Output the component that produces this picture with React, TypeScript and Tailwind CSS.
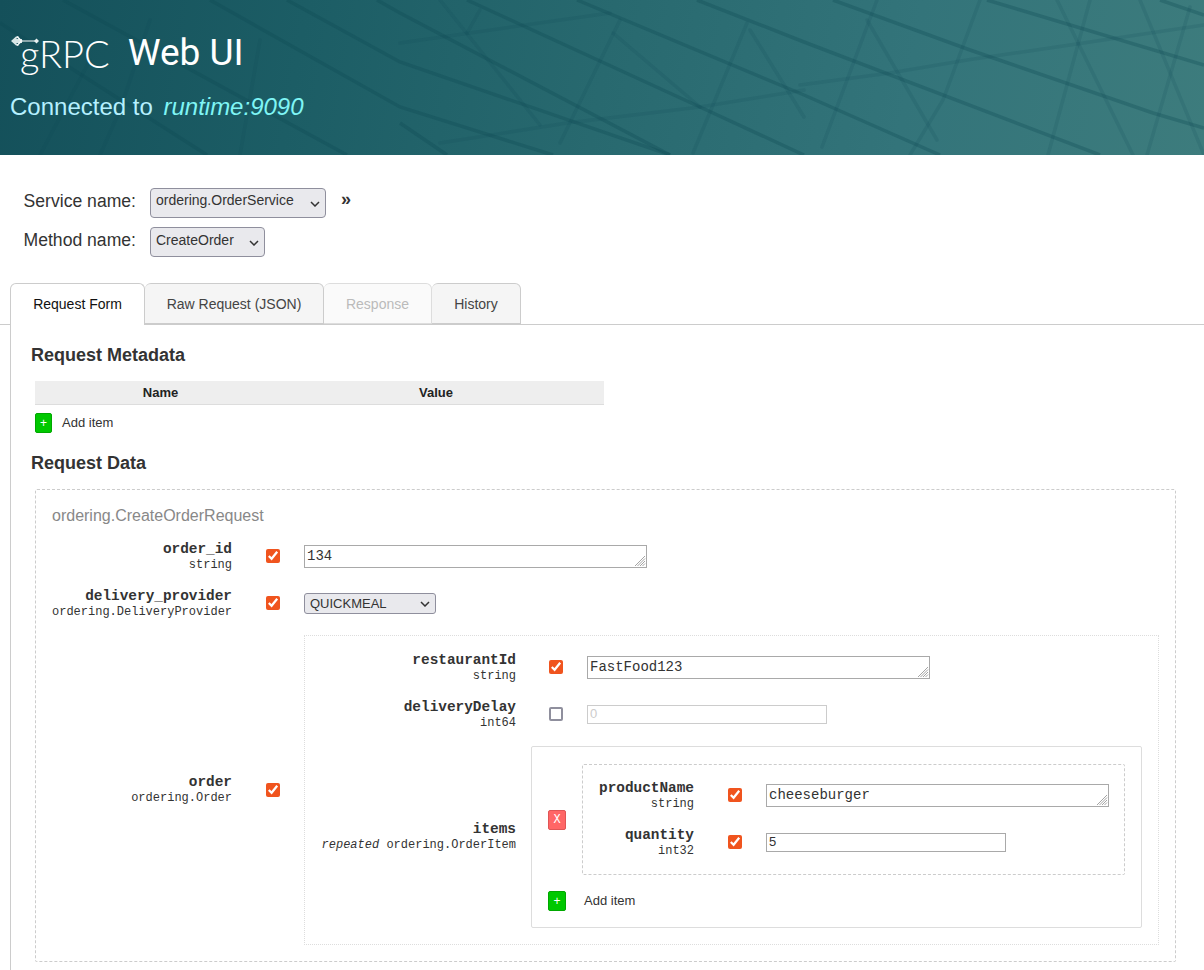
const darkLines = [
  "M0 23L207 155", "M63 0L347 155", "M210 0L400 107L553 155", "M287 0L400 62L670 155", "M377 0L400 13L670 155",
  "M400 123L447 155", "M467 0L700 107L804 155", "M577 0L804 95L940 155", "M697 0L804 42L1100 155",
  "M833 0L970 50L1153 113L1204 128", "M987 0L1204 65", "M1160 0L1204 15",
];
const softLines = [
  "M440 0L540 125", "M480 10L467 33", "M620 20L560 143", "M613 33L700 107", "M747 23L693 153", "M750 30L804 117",
  "M867 20L937 140", "M877 0L822 147", "M980 0L943 100L910 155", "M1057 0L1133 155", "M1090 0L1048 155",
  "M1140 0L1204 155", "M1190 7L1147 155", "M800 85L890 73L967 60L1070 45L1204 25", "M400 43L610 13",
  "M440 143L567 123L700 107L804 90", "M90 60L40 155", "M150 20L120 110L100 155", "M260 40L240 155",
];

function HeaderArt() {
  return (
    <svg className="absolute inset-0 blur-[0.6px]" width="1204" height="155" viewBox="0 0 1204 155" fill="none">
      {softLines.map((d) => (
        <path key={d} d={d} stroke="#0c4a52" strokeWidth="3.5" opacity="0.14" strokeLinecap="round" />
      ))}
      {darkLines.map((d) => (
        <path key={d} d={d} stroke="#0c4a52" strokeWidth="3.5" opacity="0.3" />
      ))}
    </svg>
  );
}

function GrpcMark() {
  return (
    <svg className="absolute left-[11px] top-[35px]" width="30" height="12" viewBox="0 0 30 12" fill="none">
      <path d="M0 6L5 1.5H8L5 4H11V8H5L8 10.5H5Z" fill="#d8e6e6" />
      <path d="M6 1.5L10.5 6L6 10.5" stroke="#f4f8f8" strokeWidth="1.6" />
      <path d="M11 6H25" stroke="#ffffff" strokeWidth="1" />
      <path d="M25.5 3.5L28 6L25.5 8.5L23 6Z" fill="#e8f0f0" />
    </svg>
  );
}

function Chevron() {
  return (
    <svg className="pointer-events-none absolute right-[6px] top-1/2 -translate-y-[calc(50%-1px)]" width="10" height="6" viewBox="0 0 10 6" fill="none">
      <path d="M1 1L5 5L9 1" stroke="#333" strokeWidth="1.5" />
    </svg>
  );
}

function Chk() {
  return <input type="checkbox" defaultChecked className="m-0 h-[14px] w-[14px] shrink-0 accent-[#f0541e]" />;
}

function AddItem({ gap }: { gap: string }) {
  return (
    <div className="flex items-center text-[13px] text-[#333]">
      <span className={`flex h-[20px] items-center justify-center rounded-[2px] border border-[#00a800] bg-[#00c800] text-[12px] text-white ${gap}`}>+</span>
      <span>Add item</span>
    </div>
  );
}

function FieldLabel({ name, type, width, repeated }: { name: string; type: string; width: string; repeated?: boolean }) {
  return (
    <div className={`shrink-0 text-right font-['Liberation_Mono',monospace] text-[#333] ${width}`}>
      <div className="text-[14.4px] leading-[16px] font-bold">{name}</div>
      <div className="text-[12px] leading-[16px]">
        {repeated && <i>repeated </i>}
        {type}
      </div>
    </div>
  );
}

function TextBox({ value }: { value: string }) {
  return (
    <div className="relative h-[23px] w-[343px]">
      <textarea
        readOnly
        defaultValue={value}
        className="block h-[23px] w-[343px] resize-none border border-[#a9a9a9] bg-white px-[2px] pt-[2px] font-['Liberation_Mono',monospace] text-[14px] leading-[16px] text-[#333]"
      />
      <svg className="absolute bottom-[1px] right-[1px]" width="12" height="12" viewBox="0 0 12 12" fill="none" stroke="#9a9a9a" strokeWidth="0.9">
        <path d="M1 11L11 1M3.5 11L11 3.5M6 11L11 6M8.5 11L11 8.5" />
      </svg>
    </div>
  );
}

function App() {
  return (
    <div className="h-[970px] w-[1204px] overflow-hidden bg-white font-['Liberation_Sans',Arial,sans-serif] text-[#333]">
      <header className="relative h-[155px] overflow-hidden bg-[linear-gradient(100deg,#14505a_0%,#1c5d65_25%,#28696f_50%,#33747a_75%,#3d7c7d_100%)]">
        <HeaderArt />
        <GrpcMark />
        <div className="relative pl-[20px] pt-[31px]">
          <div className="flex h-[44px] items-center text-white">
            <span className="font-['Lato',sans-serif] text-[38px] font-light leading-[44px]">gRPC</span>
            <span className="ml-[18px] font-['Roboto',sans-serif] text-[37px] leading-[44px]">Web UI</span>
          </div>
          <div className="-ml-[10px] mt-[15px] text-[24px] leading-[34px] text-[#b5f0ff]">
            Connected to <i className="ml-[4px] text-[#7ff5f5]">runtime:9090</i>
          </div>
        </div>
      </header>

      <div className="flex flex-col gap-[9px] pt-[33px]">
        <div className="flex items-center">
          <div className="w-[136px] pb-[4px] text-right text-[17.6px] leading-[20px]">Service name:</div>
          <div className="relative ml-[14px] h-[30px] w-[176px]">
            <select className="block h-[30px] w-[176px] appearance-none rounded-[4px] border border-[#8f8f9d] bg-[#e9e9ed] pb-[5px] pl-[5px] text-[14px] text-[#333]">
              <option>ordering.OrderService</option>
            </select>
            <Chevron />
          </div>
          <span className="mb-[9px] ml-[15px] text-[18px] font-bold leading-[20px]">»</span>
        </div>
        <div className="flex items-center">
          <div className="w-[136px] pb-[4px] text-right text-[17.6px] leading-[20px]">Method name:</div>
          <div className="relative ml-[14px] h-[30px] w-[115px]">
            <select className="block h-[30px] w-[115px] appearance-none rounded-[4px] border border-[#8f8f9d] bg-[#e9e9ed] pb-[4px] pl-[5px] text-[14px] text-[#333]">
              <option>CreateOrder</option>
            </select>
            <Chevron />
          </div>
        </div>
      </div>

      <div className="mt-[26px] flex h-[42px] border-b border-[#ccc] pl-[10px] text-[14px]">
        <div className="z-10 flex h-[42px] w-[135px] items-center justify-center rounded-t-[6px] border border-b-0 border-[#ccc] bg-white text-[#111]">Request Form</div>
        <div className="flex h-[41px] w-[179px] items-center justify-center rounded-t-[6px] border border-l-0 border-[#ccc] bg-[#f5f5f5] pt-[2px] text-[#444]">Raw Request (JSON)</div>
        <div className="flex h-[41px] w-[108px] items-center justify-center rounded-t-[6px] border border-l-0 border-[#ddd] bg-[#fafafa] pt-[2px] text-[#bbb]">Response</div>
        <div className="flex h-[41px] w-[89px] items-center justify-center rounded-t-[6px] border border-l-0 border-[#ccc] bg-[#f5f5f5] pt-[2px] text-[#444]">History</div>
      </div>

      <div className="ml-[10px] h-[645px] border-l border-[#ccc] pl-[20px] pt-[20px]">
        <h2 className="text-[18px] font-bold leading-[21px]">Request Metadata</h2>
        <div className="ml-[4px] mt-[15px] flex h-[24px] w-[569px] items-center border-b border-[#ddd] bg-[#eee] text-[13px] font-bold text-[#222]">
          <div className="w-[250px] pl-[1px] text-center">Name</div>
          <div className="flex-1 pr-[17px] text-center">Value</div>
        </div>
        <div className="ml-[4px] mt-[8px]">
          <AddItem gap="mr-[10px] w-[17px]" />
        </div>
        <h2 className="mt-[20px] text-[18px] font-bold leading-[21px]">Request Data</h2>

        <section className="ml-[4px] mt-[15px] h-[473px] w-[1141px] rounded-[2px] border border-dashed border-[#ccc] pl-[16px] pt-[17px]">
          <div className="text-[16px] leading-[18px] text-[#888]">ordering.CreateOrderRequest</div>

          <div className="mt-[15px] flex h-[32px] items-center">
            <div className="pt-[2px]"><FieldLabel name="order_id" type="string" width="w-[180px]" /></div>
            <div className="ml-[34px] mr-[24px] flex"><Chk /></div>
            <TextBox value="134" />
          </div>

          <div className="mt-[15px] flex h-[32px] items-center">
            <div className="pt-[2px]"><FieldLabel name="delivery_provider" type="ordering.DeliveryProvider" width="w-[180px]" /></div>
            <div className="ml-[34px] mr-[24px] flex"><Chk /></div>
            <div className="relative h-[21px] w-[132px]">
              <select className="block h-[21px] w-[132px] appearance-none rounded-[3px] border border-[#8f8f9d] bg-[#e9e9ed] pl-[5px] text-[13px] text-[#333]">
                <option>QUICKMEAL</option>
              </select>
              <Chevron />
            </div>
          </div>

          <div className="mt-[16px] flex items-center">
            <FieldLabel name="order" type="ordering.Order" width="w-[180px]" />
            <div className="ml-[34px] mr-[24px] flex"><Chk /></div>

            <div className="h-[310px] w-[855px] border border-dotted border-[#ddd] pl-[16px] pt-[15px]">
              <div className="flex h-[32px] items-center">
                <div className="pt-[2px]"><FieldLabel name="restaurantId" type="string" width="w-[195px]" /></div>
                <div className="ml-[33px] mr-[24px] flex"><Chk /></div>
                <TextBox value="FastFood123" />
              </div>

              <div className="mt-[15px] flex h-[32px] items-center">
                <div className="pt-[2px]"><FieldLabel name="deliveryDelay" type="int64" width="w-[195px]" /></div>
                <div className="ml-[33px] mr-[24px] flex">
                  <input type="checkbox" className="m-0 h-[14px] w-[14px] shrink-0 appearance-none rounded-[2px] border-2 border-[#8f8f9d] bg-white" />
                </div>
                <input disabled placeholder="0" className="h-[19px] w-[240px] border border-[#ccc] bg-white px-[2px] text-[13px] placeholder:text-[#ccc]" />
              </div>

              <div className="mt-[16px] flex items-center">
                <FieldLabel name="items" type="ordering.OrderItem" width="w-[195px]" repeated />
                <div className="ml-[15px] h-[182px] w-[611px] rounded-[2px] border border-[#ddd] pl-[16px] pt-[17px]">
                  <div className="flex items-center">
                    <span className="flex h-[20px] w-[18px] items-center justify-center rounded-[2px] border border-[#e05555] bg-[#ff6666] font-['Liberation_Mono',monospace] text-[12px] text-white">X</span>
                    <div className="ml-[16px] h-[111px] w-[543px] rounded-[2px] border border-dashed border-[#ccc] pl-[16px] pt-[14px]">
                      <div className="flex h-[32px] items-center">
                        <div className="pt-[2px]"><FieldLabel name="productName" type="string" width="w-[95px]" /></div>
                        <div className="ml-[34px] mr-[24px] flex"><Chk /></div>
                        <TextBox value="cheeseburger" />
                      </div>
                      <div className="mt-[15px] flex h-[32px] items-center">
                        <div className="pt-[2px]"><FieldLabel name="quantity" type="int32" width="w-[95px]" /></div>
                        <div className="ml-[34px] mr-[24px] flex"><Chk /></div>
                        <input readOnly defaultValue="5" className="h-[19px] w-[240px] border border-[#a9a9a9] bg-white px-[2px] text-[13px] text-[#333]" />
                      </div>
                    </div>
                  </div>
                  <div className="mt-[16px]">
                    <AddItem gap="mr-[18px] w-[18px]" />
                  </div>
                </div>
              </div>
            </div>
          </div>
        </section>
      </div>
    </div>
  );
}

export default App;
